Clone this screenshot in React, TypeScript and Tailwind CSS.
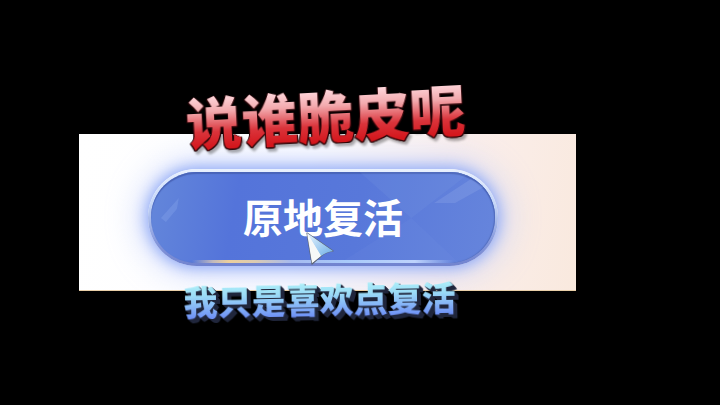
function Cursor() {
  return (
    <svg viewBox="0 0 30 34" className="absolute left-[157px] top-[62px] h-[34px] w-[30px]" aria-hidden="true">
      <defs>
        <linearGradient id="cursor-fold" x1="0" y1="0" x2="1" y2="1">
          <stop offset="0" stopColor="#e9f6ff" />
          <stop offset="1" stopColor="#6caee6" />
        </linearGradient>
      </defs>
      <path d="M2 2 L28 20 Q20 21 15 26 L7 33 Z" fill="#f2f7fa" stroke="#5b6474" strokeWidth="1.2" strokeLinejoin="round" />
      <path d="M2 2 L28 20 Q21 21 16 25 Z" fill="url(#cursor-fold)" />
      <path d="M2 2 L16 25 L7 32 Z" fill="#f6f8f8" />
    </svg>
  );
}

// Diagonal glints on the face of the button
function Glints() {
  return (
    <svg viewBox="0 0 346 91" preserveAspectRatio="none" className="absolute inset-0 h-full w-full" aria-hidden="true">
      <path d="M10 46 L28 26 L26 37 L15 50 Z" fill="#8eabee" opacity="0.3" />
      <path d="M285 31 L322 7 L335 15 L306 31 Z" fill="#a9bff1" opacity="0.2" />
      <path d="M210 0 L322 0 L262 46 Z" fill="#8ea9e8" opacity="0.12" />
      <path d="M262 46 L310 91 L190 91 Z" fill="#92a8ed" opacity="0.08" />
    </svg>
  );
}

function ReviveButton() {
  return (
    <button
      type="button"
      className="relative h-[97px] w-full rounded-full bg-[linear-gradient(to_bottom,#e9f1fe_0%,#c6d7f8_35%,#8598dc_75%,#7183cf_100%)] p-[3px] shadow-[0_0_14px_2px_#90aaf6,0_0_32px_10px_#c3d1fbb0]"
    >
      <span className="relative flex h-full w-full items-center justify-center overflow-hidden rounded-full bg-[linear-gradient(100deg,#6487da_0%,#5474da_25%,#5878da_60%,#6685dc_100%)] pb-1 text-[40px] leading-none font-bold text-white shadow-[inset_0_2px_1px_#4964b8,inset_-1px_0_1px_#536dbd]">
        <Glints />
        <span className="relative">原地复活</span>
      </span>
      <span className="absolute inset-x-11 bottom-[3px] h-[3px] bg-[linear-gradient(to_right,#a6b5e800_0%,#c1b9bd_8%,#eccf9c_14%,#dccbb2_24%,#a5baf0_38%,#a9cbfa_60%,#bed3fc_85%,#a5b9ee00_100%)]" />
      <Cursor />
    </button>
  );
}

export default function App() {
  return (
    <main className="min-h-screen bg-black pt-[86px] pr-[20%] pl-[11%] font-['Noto_Sans_CJK_SC',sans-serif]">
      <h1 className="relative z-10 -rotate-3 pr-1 text-center text-[56px] leading-14 font-black whitespace-nowrap [filter:drop-shadow(1px_0_0_#280306)_drop-shadow(-1px_0_0_#280306)_drop-shadow(0_1px_0_#280306)_drop-shadow(2px_3px_1px_#00000050)]">
        <span className="bg-[linear-gradient(to_bottom,#ffd9de_20%,#f3aaae_40%,#da343b_65%,#d4161c_85%)] bg-clip-text text-transparent">
          说谁脆皮呢
        </span>
      </h1>
      <section className="-mt-2 overflow-hidden border-b border-[#e9cfa8] bg-[linear-gradient(100deg,#ffffff_0%,#fdfdff_45%,#fbefed_72%,#f9e9de_100%)] pt-[35px] pr-[78px] pb-6 pl-[69px]">
        <ReviveButton />
      </section>
      <p className="relative z-10 -mt-3 -rotate-1 pr-4 text-center text-[34px] leading-10 font-black whitespace-nowrap [filter:drop-shadow(1px_1px_0_#20263c)_drop-shadow(1px_1px_0_#20263c)_drop-shadow(2px_2px_0_#20263c)]">
        <span className="bg-[linear-gradient(to_bottom,#b0f1f8_15%,#9bdcf7_40%,#85b4f7_65%,#6a8af6_90%)] bg-clip-text text-transparent">
          我只是喜欢点复活
        </span>
      </p>
    </main>
  );
}
